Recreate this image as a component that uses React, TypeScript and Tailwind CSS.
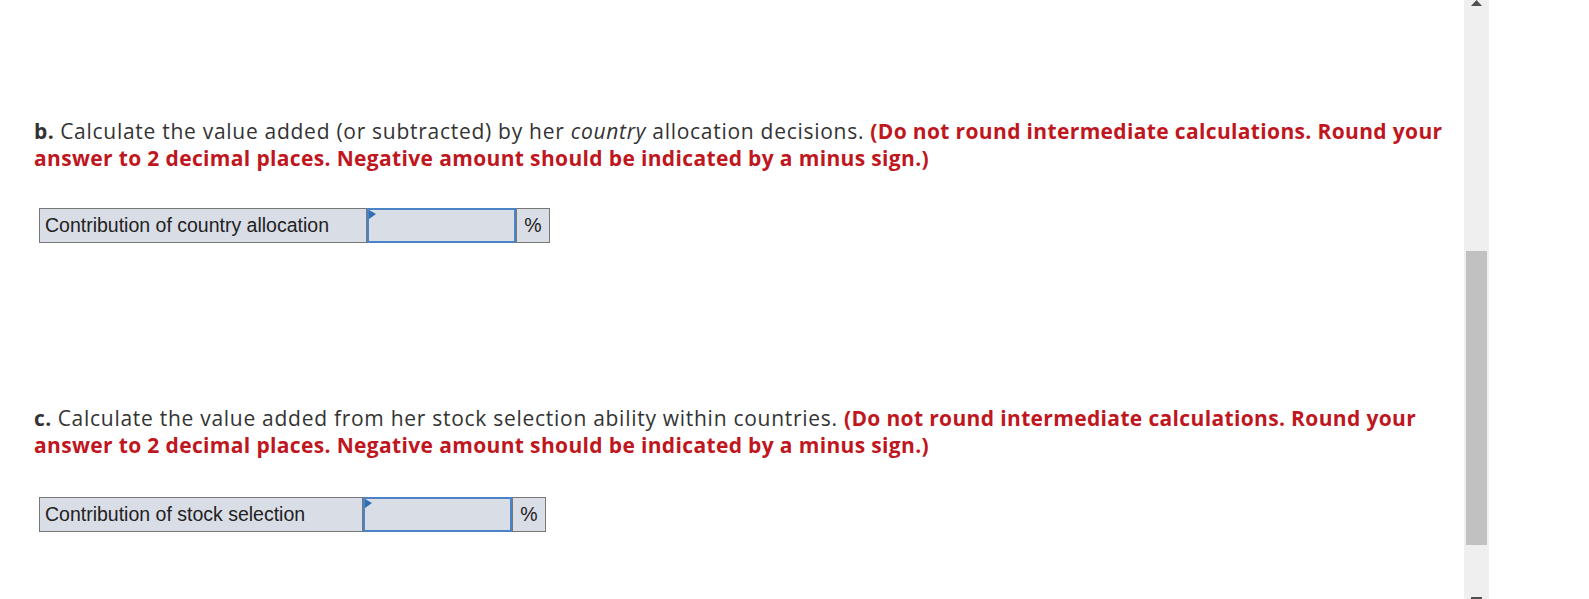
import React from "react";

function AnswerRow({ label, labelW, inputW }: { label: string; labelW: string; inputW: string }) {
  return (
    <div className="flex w-fit h-[35px] ml-[39px] bg-[#d9dde6] font-['Liberation_Sans',Arial,sans-serif] text-[19.5px] leading-normal tracking-normal text-[#222]">
      <div className={`${labelW} border border-[#777] flex items-center pl-[5px] whitespace-nowrap`}>{label}</div>
      <div className={`${inputW} relative border-2 border-[#4a84c6]`}>
        <svg className="absolute left-0 top-0" width="8" height="10" viewBox="0 0 8 10">
          <polygon points="0,0 7,4 0,9" fill="#2f6db5" />
        </svg>
      </div>
      <div className="w-[34px] border border-[#777] flex items-center justify-center">%</div>
    </div>
  );
}

export default function App() {
  return (
    <div className="flex w-[1589px] h-[599px] overflow-hidden bg-white">
      <div className="w-[1464px] font-['Open_Sans',sans-serif] text-[21px] leading-[27px] tracking-[0.72px] text-[#333]">
        <p className="mt-[118px] ml-[34px] mr-[10px]">
          <b className="tracking-[0.35px]">b.</b> Calculate the value added (or subtracted) by her <i>country</i> allocation decisions.{" "}
          <b className="text-[#c0161e] tracking-[0.35px]">
            (Do not round intermediate calculations. Round your answer to 2 decimal places. Negative amount should be indicated by a minus sign.)
          </b>
        </p>
        <div className="mt-[36px]">
          <AnswerRow label="Contribution of country allocation" labelW="w-[328px]" inputW="w-[149px]" />
        </div>
        <p className="mt-[162px] ml-[34px] mr-[10px]">
          <b className="tracking-[0.35px]">c.</b> Calculate the value added from her stock selection ability within countries.{" "}
          <b className="text-[#c0161e] tracking-[0.35px]">
            (Do not round intermediate calculations. Round your answer to 2 decimal places. Negative amount should be indicated by a minus sign.)
          </b>
        </p>
        <div className="mt-[38px]">
          <AnswerRow label="Contribution of stock selection" labelW="w-[324px]" inputW="w-[149px]" />
        </div>
      </div>
      <div className="relative w-[25px] h-full bg-[#efefef] flex flex-col">
        <svg className="absolute left-[7px] top-0" width="11" height="6" viewBox="0 0 11 6">
          <polygon points="5.5,0 11,6 0,6" fill="#505050" />
        </svg>
        <div className="mt-[251px] mx-[2px] h-[294px] bg-[#c1c1c1]" />
        <div className="absolute left-[7px] bottom-0 w-[11px] h-[2px] bg-[#505050]" />
      </div>
    </div>
  );
}
